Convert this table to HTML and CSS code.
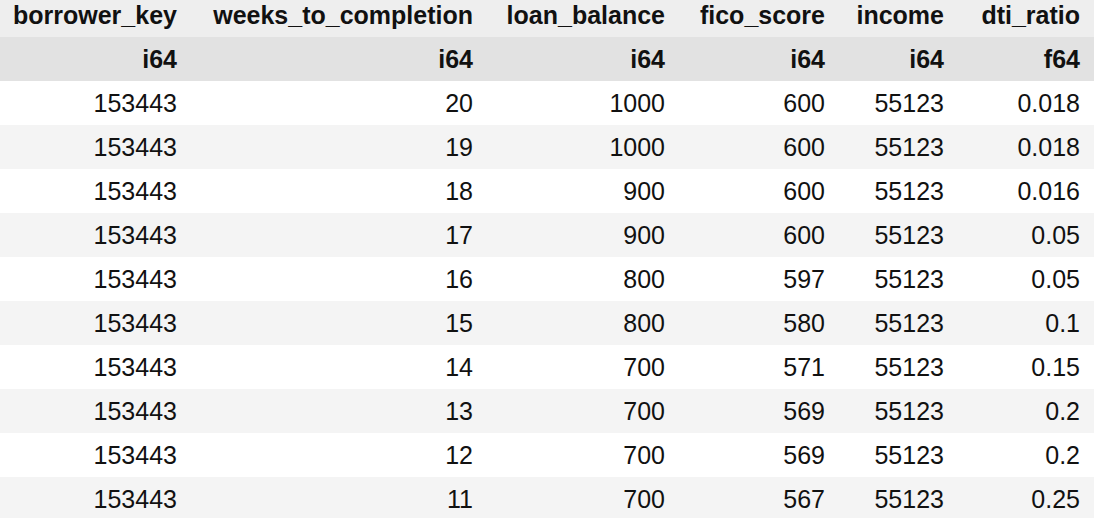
FILE: index.html
```html
<!DOCTYPE html>
<html>
<head>
<meta charset="utf-8">
<link rel="stylesheet" href="styles.css">
</head>
<body>
<table class="df">
  <colgroup>
    <col class="c1"><col class="c2"><col class="c3"><col class="c4"><col class="c5"><col class="c6">
  </colgroup>
  <thead>
    <tr class="names"><th>borrower_key</th><th>weeks_to_completion</th><th>loan_balance</th><th>fico_score</th><th>income</th><th>dti_ratio</th></tr>
    <tr class="types"><th>i64</th><th>i64</th><th>i64</th><th>i64</th><th>i64</th><th>f64</th></tr>
  </thead>
  <tbody>
    <tr><td>153443</td><td>20</td><td>1000</td><td>600</td><td>55123</td><td>0.018</td></tr>
    <tr><td>153443</td><td>19</td><td>1000</td><td>600</td><td>55123</td><td>0.018</td></tr>
    <tr><td>153443</td><td>18</td><td>900</td><td>600</td><td>55123</td><td>0.016</td></tr>
    <tr><td>153443</td><td>17</td><td>900</td><td>600</td><td>55123</td><td>0.05</td></tr>
    <tr><td>153443</td><td>16</td><td>800</td><td>597</td><td>55123</td><td>0.05</td></tr>
    <tr><td>153443</td><td>15</td><td>800</td><td>580</td><td>55123</td><td>0.1</td></tr>
    <tr><td>153443</td><td>14</td><td>700</td><td>571</td><td>55123</td><td>0.15</td></tr>
    <tr><td>153443</td><td>13</td><td>700</td><td>569</td><td>55123</td><td>0.2</td></tr>
    <tr><td>153443</td><td>12</td><td>700</td><td>569</td><td>55123</td><td>0.2</td></tr>
    <tr><td>153443</td><td>11</td><td>700</td><td>567</td><td>55123</td><td>0.25</td></tr>
  </tbody>
</table>
</body>
</html>
```

FILE: styles.css
```css
html, body {
  margin: 0;
  padding: 0;
  background: #ffffff;
  overflow: hidden;
}
.df {
  width: 1094px;
  table-layout: fixed;
  border-collapse: collapse;
  font-family: "Liberation Sans", Arial, sans-serif;
  font-size: 25px;
  color: #111111;
}
.c1 { width: 191px; }
.c2 { width: 296px; }
.c3 { width: 192px; }
.c4 { width: 160px; }
.c5 { width: 119px; }
.c6 { width: 136px; }
.df th, .df td {
  padding: 0 14px 0 0;
  text-align: right;
  white-space: nowrap;
  line-height: 44px;
  height: 44px;
}
.df th { font-weight: bold; }
.names th {
  background: #eeeeee;
  height: 37px;
  line-height: 31px;
  vertical-align: top;
}
.names th:first-child { text-align: left; padding-left: 13px; }
.types th { background: #e2e2e2; }
.df tbody tr:nth-child(even) td { background: #f4f4f4; }
.df tbody tr:nth-child(odd) td { background: #ffffff; }
```
